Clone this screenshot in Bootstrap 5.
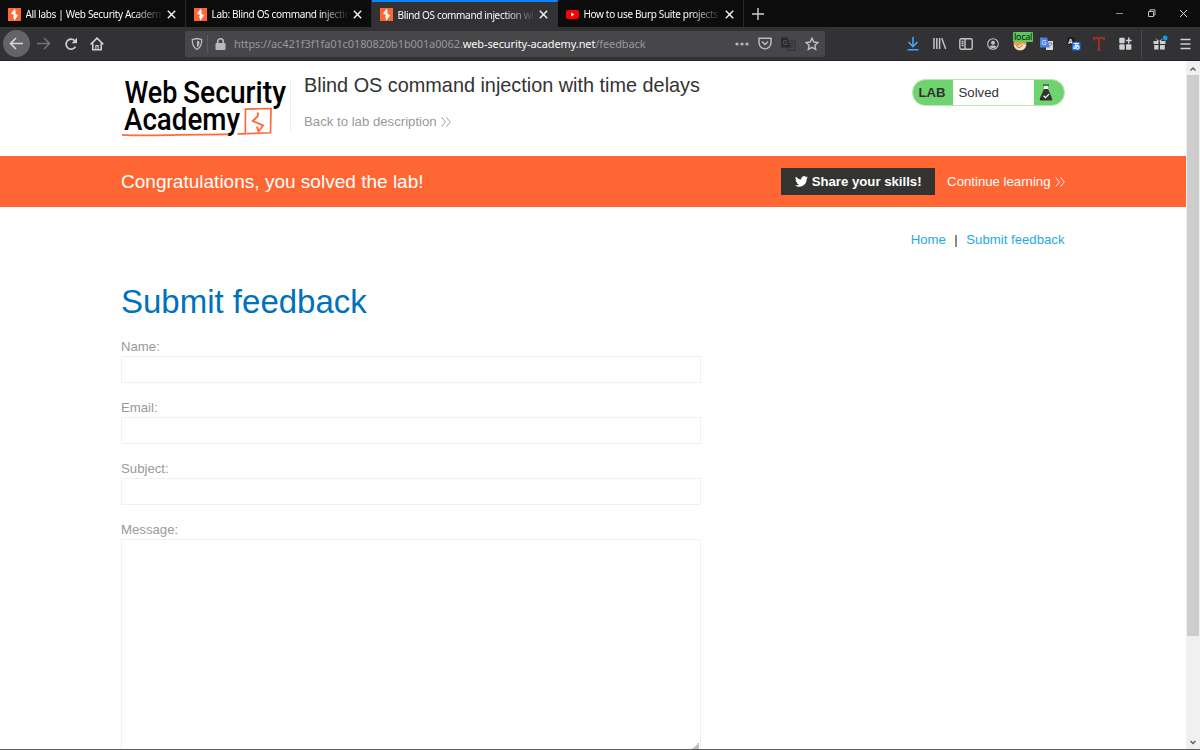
<!DOCTYPE html>
<html lang="en">
<head>
<meta charset="utf-8">
<title>Blind OS command injection with time delays</title>
<link href="https://cdn.jsdelivr.net/npm/bootstrap@5.3.0/dist/css/bootstrap.min.css" rel="stylesheet">
<style>
html,body{height:750px;overflow:hidden}
body{font-family:"Liberation Sans",Arial,sans-serif;font-size:13.2px;color:#333332;background:#fff;line-height:16px}
svg{display:block;flex:none}
a{text-decoration:none}
.tabstrip{height:27px;background:#0c0c0d;font:10px/27px "Noto Sans","Open Sans",sans-serif;letter-spacing:-.34px;color:#f9f9fa}
.tab{width:186px;height:27px;padding:1px 0 0 7.5px;border-right:1px solid #29292b}
.tab.on{background:#323234;border-top:2px solid #0a84ff;border-right-color:#323234;padding-top:0;line-height:24px}
.tab-label{width:136px;margin-left:5px;white-space:nowrap;overflow:hidden;-webkit-mask-image:linear-gradient(90deg,#000 106px,transparent 138px);mask-image:linear-gradient(90deg,#000 106px,transparent 138px)}
.cross{margin-left:5px}
.tools{height:34px;background:#323234;border-bottom:1px solid #252527}
.back{width:27px;height:27px;border-radius:50%;background:#646466;margin:0 7px 0 3px}
.url{width:640px;height:26px;background:#474749;border-radius:2px;margin-left:81px;padding:0 6px 0 6px}
.addr{font:11px/26px "Noto Sans","Open Sans",sans-serif;color:#98989a;letter-spacing:-.11px;white-space:nowrap}
.addr b{font-weight:400;color:#f9f9fa}
.sep{width:1px;height:18px;background:#5b5b5d}
.local-tag{left:0;top:-5px;width:20px;height:10px;border-radius:1px;background:#5ec75e;color:#0b1a0b;font:9px/9px "Noto Sans",sans-serif;letter-spacing:-.3px;text-align:center}
.view{height:688px}
.page{width:1186px;overflow:hidden}
.wrap{width:943.500px;margin-left:121px}
.head{height:95px}
.rule{width:1px;height:51px;background:#ebebeb;margin:19px 13px 0 0}
.title{font-size:19.85px;line-height:24px;margin:12px 0 0}
.back-link{color:#999;margin-top:17px}
.lab{width:153px;height:27px;margin-top:18px;border:1px solid #b9e8b8;border-radius:14px;overflow:hidden;background:#6fd36f}
.lab-word{width:40px;padding-left:6px;font-weight:700}
.lab-state{width:81px;padding-left:6px}
.banner{height:51px;background:#f63;color:#fff}
.congrats{font-size:19.05px}
.share{width:154px;height:27px;background:#333332;color:#fff;font-weight:700;margin-right:12px}
.links{margin-top:25px}
.links a{color:#29a9e1}
h1{font-size:33px;line-height:40px;color:#0071bc;margin:34px 0 0}
.feedback{margin-top:15px}
.feedback label{color:#999;height:18px;display:block;line-height:19px}
.feedback .form-control{width:580px;height:27px;border:1px solid #f1f1f1;border-radius:0;padding:2px;margin:1px 0 15px;display:block}
.feedback textarea.form-control{height:211px;min-height:0;margin-bottom:0;border-bottom:0;resize:none}
.grip{left:571px;bottom:1px}
.scroll{width:14px;background:#f0f0f0}
.thumb{height:561px;width:12.5px;background:#cdcdcd}
.foot{height:1px;background:#5c5c5c}
</style>
</head>
<body>
<svg width="0" height="0" class="position-absolute">
  <symbol id="burp" viewBox="0 0 13 13"><rect width="13" height="13" fill="#f63"/><path d="M6.800.5 3 5.600 6.200 7.100 5.200 8.300 6.400 12.500 10.200 7.200 7 5.600 7.900 4.500z" fill="#fff"/></symbol>
  <symbol id="x" viewBox="0 0 9 9"><path d="M.8.8l7.4 7.4M8.2.8.8 8.2" stroke="#f4f4f5" stroke-width="1.4"/></symbol>
  <symbol id="chev" viewBox="0 0 10 10"><path d="M.6.3 4.5 5 .6 9.7M5.4.3 9.3 5 5.4 9.7" fill="none" stroke="currentColor" stroke-width=".9"/></symbol>
</svg>

<div class="tabstrip d-flex">
  <div class="tab d-flex align-items-center"><svg width="13" height="13"><use href="#burp"/></svg><span class="tab-label">All labs | Web Security Academy</span><svg class="cross" width="9" height="9"><use href="#x"/></svg></div>
  <div class="tab d-flex align-items-center"><svg width="13" height="13"><use href="#burp"/></svg><span class="tab-label">Lab: Blind OS command injection</span><svg class="cross" width="9" height="9"><use href="#x"/></svg></div>
  <div class="tab on d-flex align-items-center"><svg width="13" height="13"><use href="#burp"/></svg><span class="tab-label">Blind OS command injection with</span><svg class="cross" width="9" height="9"><use href="#x"/></svg></div>
  <div class="tab d-flex align-items-center"><svg width="13" height="13" viewBox="0 0 13 13"><rect y="2" width="13" height="9" rx="2" fill="#f00"/><path d="M5.2 4.6v3.8L8.4 6.5z" fill="#fff"/></svg><span class="tab-label">How to use Burp Suite projects -</span><svg class="cross" width="9" height="9"><use href="#x"/></svg></div>
  <svg class="ms-2" width="12" height="27" viewBox="0 0 12 27"><path d="M6 8v12M0 14h12" stroke="#d0d0d2" stroke-width="1.4"/></svg>
  <div class="d-flex align-items-center ms-auto me-2 pe-1">
    <svg width="74" height="27" viewBox="0 0 74 27" fill="none" stroke="#c0c0c0"><path d="M2 13.500h7" stroke="#909090"/><path d="M34.500 11.500h5v5h-5zM36 11.500v-1.700h5v5h-1.500"/><path d="M66 10l7 7m0-7-7 7" stroke="#e0e0e0"/></svg>
  </div>
</div>

<div class="tools d-flex align-items-center">
  <div class="back d-flex align-items-center justify-content-center"><svg width="15" height="13" viewBox="0 0 15 13" fill="none" stroke="#d7d7db" stroke-width="1.6"><path d="M14 6.500H1.500M7 1 1.500 6.500 7 12"/></svg></div>
  <svg width="14" height="13" viewBox="0 0 14 13" fill="none" stroke="#747476" stroke-width="1.500"><path d="M0 6.500h12.500M7 1l5.500 5.500L7 12"/></svg>
  <svg class="me-2" style="margin-left:13px" width="14" height="14" viewBox="0 0 14 14"><path d="M11.500 9.600A5 5 0 1 1 10.600 3.600" fill="none" stroke="#d0d0d2" stroke-width="1.700"/><path d="M13 .8v5.400H7.600z" fill="#d0d0d2"/></svg>
  <svg style="margin-left:4px" width="14" height="14" viewBox="0 0 14 14"><path d="M.7 7.400 7 1.200l6.300 6.200M2.800 6.500v6.200h8.400V6.500" fill="none" stroke="#d0d0d2" stroke-width="1.600"/><path d="M5.300 12.500V8h3.400v4.500H7.600V9.200H6.400v3.300z" fill="#d0d0d2"/></svg>
  <div class="url d-flex align-items-center">
    <svg width="12" height="14" viewBox="0 0 12 14"><path d="M6 1.500 10.700 2.600C10.900 8.500 9 11 6 12.500 3 11 1.100 8.500 1.300 2.600z" fill="none" stroke="#b9b9bb" stroke-width="1.300"/><path d="M6 3.800v6.400C8 9 8.500 7.200 8.500 4.400z" fill="#b9b9bb"/></svg>
    <span class="sep mx-1"></span>
    <svg style="margin-left:3px" width="11" height="14" viewBox="0 0 11 14"><rect x=".5" y="6" width="10" height="7" rx="1" fill="#b9b9bb"/><path d="M2.700 6.500V4.500a2.800 2.800 0 0 1 5.600 0v2" fill="none" stroke="#b9b9bb" stroke-width="1.600"/></svg>
    <span class="addr ms-2">https://ac421f3f1fa01c0180820b1b001a0062.<b>web-security-academy.net</b>/feedback</span>
    <svg class="ms-auto" width="14" height="4" viewBox="0 0 14 4" fill="#b9b9bb"><circle cx="2" cy="2" r="1.600"/><circle cx="7" cy="2" r="1.600"/><circle cx="12" cy="2" r="1.600"/></svg>
    <svg style="margin-left:9px" width="14" height="13" viewBox="0 0 14 13" fill="none" stroke="#b9b9bb" stroke-width="1.500"><path d="M1 1.200h12v4.500a6 6 0 0 1-12 0zM4 4.600l3 2.900 3-2.900"/></svg>
    <svg style="margin-left:9px" width="15" height="14" viewBox="0 0 15 14"><rect x="6.500" y="4" width="7.500" height="9" fill="none" stroke="#303032"/><path d="M0 .5h6.500l3 10H0z" fill="#29292b"/><text x="1.500" y="8" font-size="6.500" fill="#68686a">G</text><path d="M8.500 6.500h4M10.500 5.500v1M9 10.500c2-1 2.500-2.500 2.700-4M9.500 8c.7 1.500 1.500 2 2.500 2.500" stroke="#303032" stroke-width=".8" fill="none"/></svg>
    <svg style="margin-left:9px" width="14" height="14" viewBox="0 0 14 14"><path d="M7 1.200 8.800 5l4.100.5-3 2.800.8 4.100L7 10.400l-3.700 2 .8-4.100-3-2.800L5.200 5z" fill="none" stroke="#c0c0c2" stroke-width="1.400"/></svg>
  </div>
  <div class="d-flex align-items-center ms-auto" style="margin-right:9px">
    <svg width="12" height="15" viewBox="0 0 12 15" fill="none" stroke="#45a1ff" stroke-width="1.600"><path d="M6 1v9.500M1.500 6 6 10.500 10.500 6M.5 13.700h11"/></svg>
    <svg style="margin-left:14px" width="14" height="13" viewBox="0 0 14 13" fill="none" stroke="#c4c4c6" stroke-width="1.500"><path d="M1 1v11M3.800 1v11M6.600 1v11M8.700 1.200l4 10.800"/></svg>
    <svg style="margin-left:12px" width="14" height="12" viewBox="0 0 14 12" fill="none" stroke="#c4c4c6" stroke-width="1.400"><rect x=".8" y=".8" width="12.400" height="10.400" rx="1.500"/><path d="M6 1v10M2.500 3.500h2M2.500 5.500h2M2.500 7.500h2"/></svg>
    <svg style="margin-left:14px" width="12" height="12" viewBox="0 0 12 12"><circle cx="6" cy="6" r="5.300" fill="none" stroke="#c4c4c6" stroke-width="1.100"/><circle cx="6" cy="4.800" r="2" fill="#c4c4c6"/><path d="M2.500 8.800C4 7 8 7 9.500 8.800 8 10.500 4 10.500 2.500 8.800z" fill="#c4c4c6"/></svg>
    <div class="position-relative" style="margin-left:14px;width:14px;height:14px"><svg width="14" height="14" viewBox="0 0 14 14"><circle cx="7" cy="7" r="6.500" fill="#e8a04c"/><path d="M1 8.500c2-1.500 3.500 1.500 5.500 0s4-2 6.700-.5c-.5 3.500-3 5.200-6 5.200S1.500 11.500 1 8.500z" fill="#eee2d2"/><path d="M3 8.500 6 11l4-3" stroke="#d86c1f" fill="none"/></svg><span class="local-tag position-absolute">local</span></div>
    <svg style="margin-left:13px" width="14" height="14" viewBox="0 0 14 14"><rect x="6" y="4" width="7" height="9" fill="#dadada"/><path d="M0 .5h7L10 10.500H0z" fill="#4a80e8"/><text x="1.500" y="8" font-size="6.500" fill="#fff">G</text><path d="M9 6h3M10.500 8.500c1 0 1.300-.8 1.400-2" stroke="#555" fill="none" stroke-width=".8"/></svg>
    <svg style="margin-left:13px" width="14" height="14" viewBox="0 0 14 14"><rect width="8" height="8" fill="#202022"/><text x="1" y="7" font-size="7" font-weight="700" fill="#eee">A</text><rect x="5" y="5" width="8.500" height="8.500" rx="1" fill="#1a6df0"/><text x="5.500" y="12" font-size="7.500" font-family="Noto Sans CJK JP,sans-serif" font-weight="700" fill="#fff">あ</text></svg>
    <svg style="margin-left:12px" width="12" height="14" viewBox="0 0 12 14"><path d="M1 3.500V1h10v2.500M6 1v11.500M4.500 13h3" fill="none" stroke="#b8301c" stroke-width="1.600"/></svg>
    <svg style="margin-left:14px" width="13" height="13" viewBox="0 0 13 13" fill="#d0d0d2"><rect x=".3" y=".8" width="5.400" height="5.400" rx=".8"/><rect x=".3" y="7.300" width="5.400" height="5.400" rx=".8"/><rect x="7" y="7.300" width="5.400" height="5.400" rx=".8"/><path d="M9 .5h1.500v2.200h2.200v1.500h-2.200v2.200H9V4.200H6.800V2.700H9z"/></svg>
    <span class="sep" style="margin-left:9px;height:28px;background:#4b4b4d"></span>
    <svg style="margin-left:11px" width="15" height="18" viewBox="0 0 15 18"><path d="M.5 6h5v3h-5zM7 6h5.500v3H7zM1.200 10h4.300v4.500H1.200zM7 10h4.800v4.500H7zM2.500 3.200 6.200 6l3.600-2.800-2 3H4.500z" fill="#d0d0d2"/><circle cx="12.200" cy="3" r="2.400" fill="#00a7ec"/></svg>
    <svg style="margin-left:12px" width="11" height="12" viewBox="0 0 11 12"><path d="M.5 1.500h10M.5 6h10M.5 10.500h10" stroke="#d0d0d2" stroke-width="1.400"/></svg>
  </div>
</div>

<div class="view d-flex">
  <main class="page">
    <header class="wrap head d-flex">
      <svg width="169" height="95" viewBox="121.500 61 169 95" font-family="Roboto,sans-serif" font-size="30.500" font-weight="500">
        <text x="125" y="103" textLength="53" lengthAdjust="spacingAndGlyphs">Web</text>
        <text x="183.500" y="103" textLength="103" lengthAdjust="spacingAndGlyphs">Security</text>
        <text x="124.500" y="130" textLength="116" lengthAdjust="spacingAndGlyphs">Academy</text>
        <path d="M122.500 134.800C150 136.500 190 134 229 134.300M238 133.800h7.800L246 109.200l25.500-.7-.5 24.300-24 .8" fill="none" stroke="#ff6a3c" stroke-width="1.700"/>
        <path d="M258.700 112.500 258 116.500 253.300 121 263.500 125.500 259 131.500 257.500 126.500" fill="none" stroke="#ff6a3c" stroke-width="1.900"/>
      </svg>
      <span class="rule"></span>
      <div><h2 class="title fw-normal">Blind OS command injection with time delays</h2>
        <a class="back-link d-flex align-items-center" href="#">Back to lab description<svg class="ms-1" width="10" height="10"><use href="#chev"/></svg></a></div>
      <div class="lab d-flex align-items-stretch ms-auto">
        <span class="lab-word d-flex align-items-center">LAB</span><span class="lab-state bg-white d-flex align-items-center">Solved</span>
        <svg style="margin-left:5px" width="14" height="25" viewBox="0 0 14 25"><rect x="5" y="5" width="4" height="4" fill="#fff"/><path d="M4 4.500h6v1.300H4zM5 9h4l4.200 9.500q.5 2-1 2H1.800q-1.500 0-1-2z" fill="#333332"/><path d="m4.500 15.700 2 1.900 3.500-3.500" fill="none" stroke="#fff" stroke-width="1.200"/></svg>
      </div>
    </header>
    <section class="banner"><div class="wrap d-flex align-items-center h-100">
      <span class="congrats">Congratulations, you solved the lab!</span>
      <a class="share d-flex align-items-center justify-content-center ms-auto" href="#"><svg class="me-1" width="13" height="11" viewBox="0 0 24 20"><path d="M24 2.400a10 10 0 0 1-2.800.8A5 5 0 0 0 23.300.5a10 10 0 0 1-3.100 1.200 4.900 4.900 0 0 0-8.400 4.500A14 14 0 0 1 1.700 1a4.900 4.900 0 0 0 1.500 6.600A5 5 0 0 1 1 7a4.900 4.900 0 0 0 3.900 4.900 5 5 0 0 1-2.200.1 4.900 4.900 0 0 0 4.600 3.400A10 10 0 0 1 0 17.400 14 14 0 0 0 21.500 5a10 10 0 0 0 2.500-2.600z" fill="#fff"/></svg>Share your skills!</a>
      <a class="text-white d-flex align-items-center" href="#">Continue learning<svg class="ms-1" width="10" height="10"><use href="#chev"/></svg></a>
    </div></section>
    <nav class="wrap links d-flex justify-content-end"><a href="#">Home</a><span style="margin:0 8.500px">|</span><a href="#">Submit feedback</a></nav>
    <div class="wrap position-relative">
      <h1 class="fw-normal">Submit feedback</h1>
      <form class="feedback">
        <label for="n">Name:</label><input id="n" class="form-control">
        <label for="e">Email:</label><input id="e" class="form-control">
        <label for="s">Subject:</label><input id="s" class="form-control">
        <label for="t">Message:</label><textarea id="t" class="form-control"></textarea>
      </form>
      <svg class="grip position-absolute" width="7" height="6" viewBox="0 0 7 6"><path d="M0 6V5h2V3.500h2V2h1.500V0H7v6z" fill="#bdbdbd"/></svg>
    </div>
  </main>
  <aside class="scroll d-flex flex-column">
    <svg width="14" height="14" viewBox="0 0 14 14"><path d="m4.500 9.500 2.500-2.500 2.500 2.500" fill="none" stroke="#606060" stroke-width="1.500"/></svg>
    <div class="thumb mx-auto"></div>
    <svg class="mt-auto" width="14" height="14" viewBox="0 0 14 14"><path d="m4.500 6 2.500 2.500L9.500 6" fill="none" stroke="#606060" stroke-width="1.500"/></svg>
  </aside>
</div>
<div class="foot"></div>
<script src="https://cdn.jsdelivr.net/npm/bootstrap@5.3.0/dist/js/bootstrap.bundle.min.js"></script>
</body>
</html>
